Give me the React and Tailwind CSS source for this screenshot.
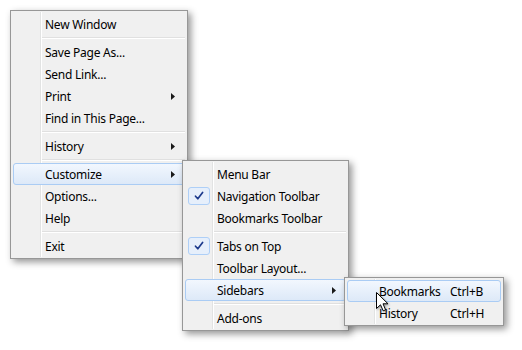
import React from 'react';

const FONT = "font-['Segoe_UI','Noto_Sans',sans-serif]";

const MAIN = [
  { label: 'New Window' },
  { sep: true },
  { label: 'Save Page As...' },
  { label: 'Send Link...' },
  { label: 'Print', arrow: true },
  { label: 'Find in This Page...' },
  { sep: true },
  { label: 'History', arrow: true },
  { sep: true },
  { label: 'Customize', arrow: true, active: true },
  { label: 'Options...' },
  { label: 'Help' },
  { sep: true },
  { label: 'Exit' }
];

const CUSTOMIZE = [
  { label: 'Menu Bar' },
  { label: 'Navigation Toolbar', checked: true },
  { label: 'Bookmarks Toolbar' },
  { sep: true },
  { label: 'Tabs on Top', checked: true },
  { label: 'Toolbar Layout...' },
  { label: 'Sidebars', arrow: true, active: true },
  { sep: true },
  { label: 'Add-ons' }
];

const SIDEBARS = [
  { label: 'Bookmarks', shortcut: 'Ctrl+B', active: true },
  { label: 'History', shortcut: 'Ctrl+H' }
];

function Check() {
  return (
    <svg width="10" height="10" viewBox="0 0 10 10">
      <path d="M1.5 5.2 L3.8 7.8 L8.6 1.4" fill="none" stroke="#1c3a8c" strokeWidth="1.7" strokeLinecap="round" strokeLinejoin="round" />
    </svg>
  );
}

function Arrow() {
  return (
    <svg width="4" height="7" viewBox="0 0 4 7" className="shrink-0">
      <path d="M0 0 L4 3.5 L0 7 Z" fill="#1a1a1a" />
    </svg>
  );
}

function Menu({ items, className }) {
  return (
    <div className={`${className} flex bg-[#f0f0f0] border border-[#979797] shadow-[3px_3px_7px_rgba(0,0,0,0.42)] ${FONT} text-[12px] tracking-[-0.25px] text-black`}>
      <div className="relative flex-1 flex flex-col pt-[2px] pb-[1px]">
        {/* gutter line */}
        <div className="absolute left-[29px] top-[1px] bottom-[1px] w-[2px] border-l border-[#e2e3e3] border-r border-r-white" />
        {items.map((it, i) =>
          it.sep ? (
            <div key={i} className="h-[6px] flex items-center pl-[31px] pr-[2px]">
              <div className="w-full h-[2px] border-t border-[#e0e0e0] border-b border-b-white" />
            </div>
          ) : (
            <div
              key={i}
              className={`relative h-[22px] mx-[2px] flex items-center rounded-[3px] border ${
                it.active ? 'border-[#aaccf4] bg-gradient-to-b from-[#f2f7fe] to-[#dde9f8]' : 'border-transparent'
              }`}
            >
              <div className="w-[26px] h-full flex items-center justify-center shrink-0">
                {it.checked && (
                  <div className="w-[22px] h-[18px] flex items-center justify-center rounded-[3px] border border-[#aecff7] bg-[#e6effb]">
                    <Check />
                  </div>
                )}
              </div>
              <span className="pl-[5px] pt-[2px] flex-1 whitespace-nowrap leading-none">{it.label}</span>
              {it.shortcut && <span className="w-[50px] pt-[2px] whitespace-nowrap leading-none">{it.shortcut}</span>}
              {it.arrow && <span className="pr-[9px] flex items-center"><Arrow /></span>}
            </div>
          )
        )}
      </div>
    </div>
  );
}

function Cursor() {
  return (
    <svg width="14" height="21" viewBox="0 0 14 21" className="absolute left-[376px] top-[292px] drop-shadow-[1px_1px_1px_rgba(0,0,0,0.35)]">
      <path d="M0.5 0.5 L0.5 16.5 L4.5 12.8 L7.2 18.8 L9.6 17.8 L7 11.8 L12 11.8 Z" fill="#fff" stroke="#000" strokeWidth="1" strokeLinejoin="round" />
    </svg>
  );
}

export default function App() {
  return (
    <div className="relative w-[522px] h-[350px] bg-white overflow-hidden">
      <div className="pt-[10px] pl-[10px]">
        <Menu items={MAIN} className="w-[178px]" />
      </div>
      <Menu items={CUSTOMIZE} className="absolute left-[182px] top-[160px] w-[167px]" />
      <Menu items={SIDEBARS} className="absolute left-[344px] top-[277px] w-[160px]" />
      <Cursor />
    </div>
  );
}
